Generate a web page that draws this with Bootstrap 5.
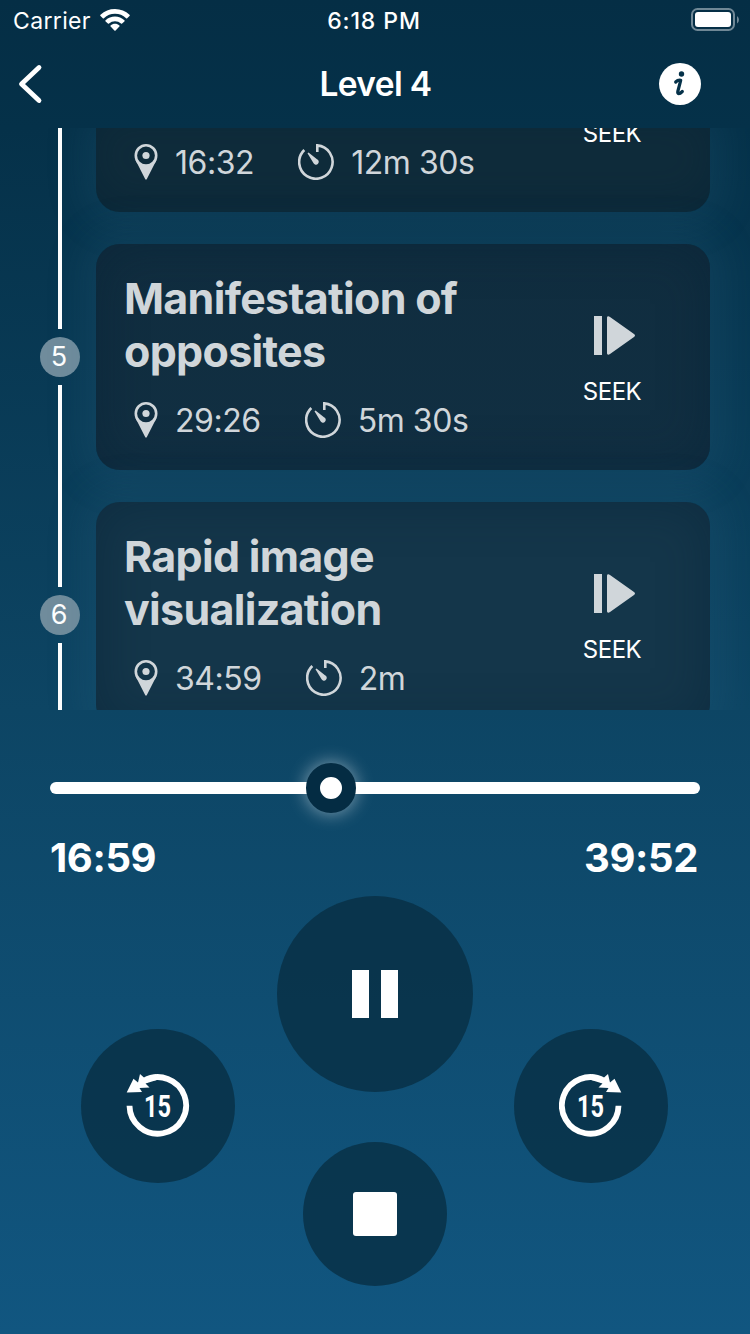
<!DOCTYPE html>
<html lang="en">
<head>
<meta charset="utf-8">
<meta name="viewport" content="width=device-width, initial-scale=1">
<title>Level 4</title>
<link href="https://cdn.jsdelivr.net/npm/bootstrap@5.3.0/dist/css/bootstrap.min.css" rel="stylesheet">
<style>
  body { font-family: Inter, "Liberation Sans", sans-serif; background: #052f47; }
  svg { display: block; flex: none; }
  .screen { width: 750px; height: 1334px; background: linear-gradient(#052e45, #053149 128px, #0d4564 710px, #115680); }
  .status { height: 40px; font-size: 23px; line-height: 38px; padding: 0 11px 0 13px; }
  .status > span, .carrier { padding-top: 2px; }
  .status-side { width: 200px; }
  .carrier { letter-spacing: .35px; }
  .clock { font-weight: 500; letter-spacing: .9px; margin-right: 4px; }
  .topbar { height: 88px; padding: 0 49px 0 18px; }
  .topbar h1 { font-size: 33.5px; font-weight: 600; line-height: 88px; letter-spacing: -.65px; }
  .side { width: 60px; }
  .chapters { height: 582px; }
  .chapter { height: 258px; padding: 0 40px; }
  .chapter.scrolled { height: 100px; }
  .rail { width: 40px; margin-right: 16px; gap: 8px; }
  .rail-line { width: 4px; background: #fff; }
  .step { width: 40px; height: 40px; background: #708c9c; font-size: 27px; line-height: 40px; padding-right: 2px; }
  .panel { margin: 16px 0; padding: 28px 29px 0 28px; border-radius: 24px; color: #d0d6da;
    background: linear-gradient(#102d3f, #112f42); box-shadow: 0 0 36px 16px rgba(60,120,155,.13), inset 0 0 50px rgba(4,31,49,.4); }
  .chapter:last-child .panel { background: #14364a; }
  .scrolled .panel { margin-top: 0; padding-top: 16px; border-radius: 0 0 24px 24px; background: #0f2c3b; box-shadow: 0 0 36px 16px rgba(60,120,155,.13), inset 0 -12px 40px rgba(4,31,49,.3); }
  .panel h2 { font-size: 43px; font-weight: 700; line-height: 53px; letter-spacing: -.7px; margin-bottom: 24px; }
  .meta { height: 36px; padding-left: 10px; font-size: 32px; line-height: 36px; letter-spacing: -.45px; }
  .meta span { padding-top: 2px; }
  .meta svg { margin-right: 17px; }
  .meta .timer { margin-left: 44px; }
  .seek { width: 138px; margin-top: 44px; }
  .seek span { color: #fff; font-size: 24px; line-height: 30px; margin-top: 22px; letter-spacing: -.5px; }
  .scrolled .seek { margin-top: -25px; }
  .scrolled .seek span { margin-top: 0; }
  .player { padding: 72px 50px 0; }
  .track { height: 12px; border-radius: 6px; background: #fff; }
  .knob { width: 50px; height: 50px; left: 256px; top: -19px; border: 14px solid #042c43; background: #fff;
    box-shadow: 0 0 18px rgba(255,255,255,.5); }
  .times { font-size: 40px; font-weight: 700; line-height: 48px; margin: 40px 2px 0 0; letter-spacing: -.4px; height: 47px; }
  .controls { padding: 15px 82px 0 81px; }
  .ctl { border: 0; padding: 0; color: #fff; background: rgba(8,46,67,.78); }
  .big { width: 196px; height: 196px; }
  .skip { width: 154px; height: 154px; margin-top: 133px; }
  .stop { width: 144px; height: 144px; margin-top: 50px; }
</style>
</head>
<body>
<svg width="0" height="0" class="position-absolute">
  <symbol id="pin" viewBox="0 0 24 36">
    <circle cx="12" cy="11.5" r="10.200" fill="none" stroke="currentColor" stroke-width="2.600"/>
    <circle cx="12" cy="11.5" r="3.600" fill="currentColor"/>
    <path fill="currentColor" d="M1 14.500C5 22.500 19 22.500 23 14.500Q22 18 20.500 20L12.600 35.500h-1.200L3.500 20Q2 18 1 14.500z"/>
    <path fill="currentColor" d="M4 19q8 4.500 16 0l-4 7H8z"/>
  </symbol>
  <symbol id="timer" viewBox="0 0 36 36">
    <path fill="none" stroke="currentColor" stroke-width="2.600" d="M6.300 6A16.700 16.700 0 1 0 19.300 1.400V8"/>
    <path fill="currentColor" d="M9.500 9.200l1-.6 8.500 6.700a2.800 2.800 0 1 1-3.600 3.700z"/>
  </symbol>
  <symbol id="play" viewBox="0 0 41 39">
    <path fill="currentColor" d="M0 0h8v39H0zM13 2c0-2 1.500-2 3-1l24 17q2 1.500 0 3L16 38c-1.500 1-3 1-3-1z"/>
  </symbol>
  <symbol id="skip-ring" viewBox="0 0 64 64">
    <path d="M3.500 31.800A28.300 28.300 0 1 0 18 6.700" fill="none" stroke="#fff" stroke-width="5.800"/>
    <path fill="#fff" d="M.7 18.500L7.500 4.700 12 8.500 14 0l5 4.500L30 .2v6L19.500 9.500 23.500 13.500 13.500 14 16 18z"/>
  </symbol>
</svg>

<main class="screen d-flex flex-column text-white overflow-hidden">
  <div class="status d-flex justify-content-between align-items-center">
    <div class="status-side d-flex align-items-center">
      <span class="carrier">Carrier</span>
      <svg width="30" height="22" viewBox="0 0 30 22" style="margin-left:9px"><path fill="#fff" d="M15 0c5.600 0 10.700 2.200 14.500 5.800q.6.600 0 1.200L27.200 9.200q-.5.500-1.100 0a16.300 16.300 0 0 0-22.200 0q-.6.500-1.100 0L.5 7q-.6-.6 0-1.200A21 21 0 0 1 15 0zM15 7.500c3.600 0 6.900 1.400 9.400 3.700q.6.600 0 1.200l-2.300 2.200q-.5.500-1.100 0a9 9 0 0 0-12 0q-.6.500-1.100 0l-2.300-2.200q-.6-.6 0-1.200A13.800 13.800 0 0 1 15 7.500zM15 14.800c1.700 0 3.200.6 4.400 1.600q.6.600 0 1.200l-3.800 3.800q-.6.600-1.200 0l-3.800-3.800q-.6-.6 0-1.200c1.200-1 2.700-1.600 4.400-1.600z"/></svg>
    </div>
    <span class="clock">6:18 PM</span>
    <div class="status-side d-flex justify-content-end">
      <svg width="48" height="24" viewBox="0 0 48 24"><rect x="1" y="1" width="42" height="21" rx="5.500" fill="none" stroke="#708896" stroke-width="2"/><rect x="4" y="4" width="36" height="15" rx="3" fill="#fff"/><path fill="#708896" d="M46 8q2 1.500 2 3.700T46 15.500z"/></svg>
    </div>
  </div>

  <header class="topbar d-flex justify-content-between align-items-center">
    <div class="side"><svg width="26" height="40" viewBox="0 0 26 40"><path d="M21 3.500L3.500 20 21 36.500" fill="none" stroke="#fff" stroke-width="4.800" stroke-linecap="round" stroke-linejoin="round"/></svg></div>
    <h1 class="m-0 ps-4 ms-2">Level 4</h1>
    <div class="side d-flex justify-content-end">
      <svg width="42" height="42" viewBox="0 0 42 42"><circle cx="21" cy="21" r="21" fill="#fff"/><circle cx="22.500" cy="11" r="2.700" fill="#053149"/><path d="M16.700 19c1.500-1.500 3-2 5-1.700L18.800 28.500c-.5 2.500 1.500 3 4.500 0" fill="none" stroke="#053149" stroke-width="3.200" stroke-linecap="round" stroke-linejoin="round"/></svg>
    </div>
  </header>

  <section class="chapters overflow-hidden flex-shrink-0">
    <article class="chapter scrolled d-flex">
      <div class="rail d-flex flex-column align-items-center"><div class="rail-line flex-fill"></div></div>
      <div class="panel d-flex flex-fill">
        <div class="meta d-flex align-items-center flex-fill">
          <svg width="24" height="36"><use href="#pin"/></svg><span>16:32</span>
          <svg class="timer" width="36" height="36"><use href="#timer"/></svg><span>12m 30s</span>
        </div>
        <div class="seek d-flex flex-column align-items-center"><span>SEEK</span></div>
      </div>
    </article>

    <article class="chapter d-flex">
      <div class="rail d-flex flex-column align-items-center">
        <div class="rail-line flex-fill"></div><div class="step rounded-circle text-center">5</div><div class="rail-line flex-fill"></div>
      </div>
      <div class="panel d-flex flex-fill">
        <div class="flex-fill">
          <h2>Manifestation of<br>opposites</h2>
          <div class="meta d-flex align-items-center">
            <svg width="24" height="36"><use href="#pin"/></svg><span>29:26</span>
            <svg class="timer" width="36" height="36"><use href="#timer"/></svg><span>5m 30s</span>
          </div>
        </div>
        <div class="seek d-flex flex-column align-items-center"><svg class="ms-1" width="41" height="39"><use href="#play"/></svg><span>SEEK</span></div>
      </div>
    </article>

    <article class="chapter d-flex">
      <div class="rail d-flex flex-column align-items-center">
        <div class="rail-line flex-fill"></div><div class="step rounded-circle text-center">6</div><div class="rail-line flex-fill"></div>
      </div>
      <div class="panel d-flex flex-fill">
        <div class="flex-fill">
          <h2>Rapid image<br>visualization</h2>
          <div class="meta d-flex align-items-center">
            <svg width="24" height="36"><use href="#pin"/></svg><span>34:59</span>
            <svg class="timer" width="36" height="36"><use href="#timer"/></svg><span>2m</span>
          </div>
        </div>
        <div class="seek d-flex flex-column align-items-center"><svg class="ms-1" width="41" height="39"><use href="#play"/></svg><span>SEEK</span></div>
      </div>
    </article>
  </section>

  <section class="player">
    <div class="track position-relative"><div class="knob position-absolute rounded-circle"></div></div>
    <div class="times d-flex justify-content-between"><span>16:59</span><span>39:52</span></div>
  </section>

  <section class="controls d-flex justify-content-between align-items-start">
    <button class="ctl skip rounded-circle d-flex align-items-center justify-content-center" aria-label="Back">
      <svg width="64" height="64" viewBox="0 0 64 64"><use href="#skip-ring" width="64" height="64"/><text x="18" y="43" font-family="Roboto" font-weight="700" font-size="32" textLength="27" lengthAdjust="spacingAndGlyphs" fill="#fff">15</text></svg>
    </button>
    <div class="d-flex flex-column align-items-center">
      <button class="ctl big rounded-circle d-flex align-items-center justify-content-center" aria-label="Pause">
        <svg width="46" height="48"><path fill="#fff" d="M0 0h17v48H0zM29 0h17v48H29z"/></svg>
      </button>
      <button class="ctl stop rounded-circle d-flex align-items-center justify-content-center" aria-label="Stop">
        <svg width="44" height="44"><rect width="44" height="44" rx="3" fill="#fff"/></svg>
      </button>
    </div>
    <button class="ctl skip rounded-circle d-flex align-items-center justify-content-center" aria-label="Forward">
      <svg width="64" height="64" viewBox="0 0 64 64"><g transform="translate(63 0) scale(-1 1)"><use href="#skip-ring" width="64" height="64"/></g><text x="18" y="43" font-family="Roboto" font-weight="700" font-size="32" textLength="27" lengthAdjust="spacingAndGlyphs" fill="#fff">15</text></svg>
    </button>
  </section>
</main>
<script src="https://cdn.jsdelivr.net/npm/bootstrap@5.3.0/dist/js/bootstrap.bundle.min.js"></script>
</body>
</html>
